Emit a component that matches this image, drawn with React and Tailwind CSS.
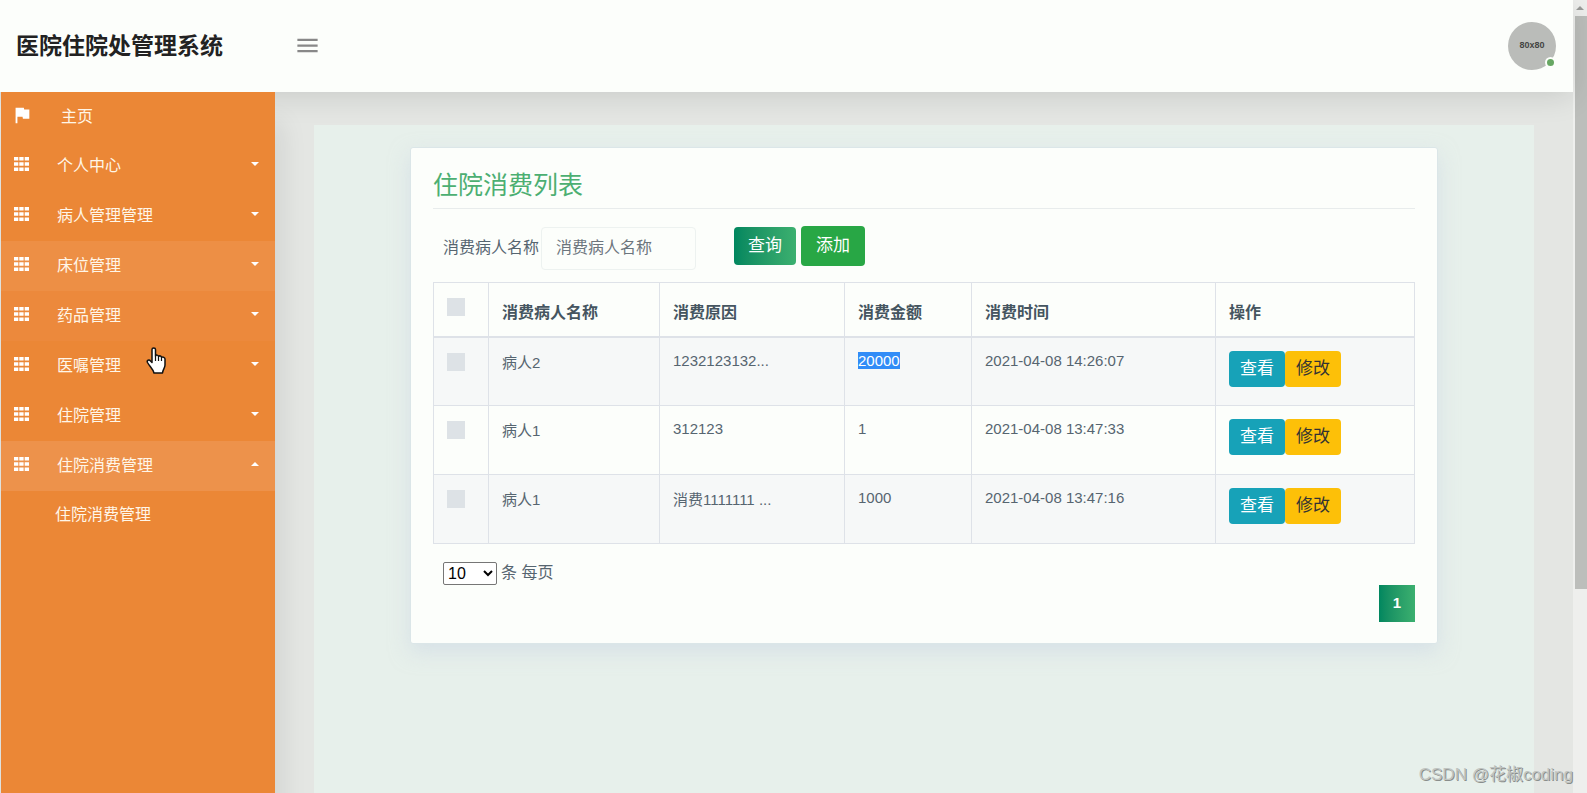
import React from 'react';
import { MdFlag, MdMenu } from 'react-icons/md';

const menu = [
  { name: '个人中心' },
  { name: '病人管理管理' },
  { name: '床位管理', bg: 'bg-[#ed8f45]' },
  { name: '药品管理', bg: 'bg-[#ec893c]' },
  { name: '医嘱管理' },
  { name: '住院管理' },
  { name: '住院消费管理', bg: 'bg-[#ed924b]', open: true },
];

const rows = [
  { name: '病人2', reason: '1232123132...', money: '20000', time: '2021-04-08 14:26:07', selected: true },
  { name: '病人1', reason: '312123', money: '1', time: '2021-04-08 13:47:33' },
  { name: '病人1', reason: '消费1111111 ...', money: '1000', time: '2021-04-08 13:47:16' },
];

const CheckBox = ({ label }) => (
  <input type="checkbox" aria-label={label} className="block appearance-none w-[18px] h-[18px] bg-[#dde2e6]" />
);

const Caret = ({ up }) => (
  <svg viewBox="0 0 8 4" className="w-2 h-1">
    <path d={up ? 'M0 4L4 0L8 4Z' : 'M0 0L4 4L8 0Z'} fill="currentColor" />
  </svg>
);

const GridIcon = () => (
  <svg viewBox="0 0 15 14" className="w-[15px] h-[14px]" fill="#fff">
    <path d="M0 0h4.300v3.600H0zM5.300 0h4.300v3.600H5.300zM10.700 0H15v3.600h-4.300zM0 5.200h4.300v3.600H0zM5.300 5.200h4.300v3.600H5.300zM10.700 5.200H15v3.600h-4.300zM0 10.400h4.300V14H0zM5.300 10.400h4.300V14H5.300zM10.700 10.400H15V14h-4.300z" />
  </svg>
);

const Header = () => (
  <header className="flex items-center h-[92px] shrink-0 pl-4 pr-[17px] pb-px bg-[#fcfefb] shadow-[0_4px_30px_rgba(0,0,0,0.12)]">
    <h1 className="w-[278px] text-[23px] leading-8 font-bold text-[#222]">医院住院处管理系统</h1>
    <button type="button" aria-label="菜单" className="text-[#888]">
      <MdMenu className="w-[27px] h-[27px]" />
    </button>
    <div className="relative ml-auto flex items-center justify-center w-12 h-12 rounded-full bg-[#babcb9] text-[9px] font-bold text-[#444]">
      80x80
      <span className="absolute right-0 bottom-0.5 w-[11px] h-[11px] rounded-full border-2 border-[#fcfefb] bg-[#67a763]" />
    </div>
  </header>
);

const Sidebar = () => (
  <nav className="relative w-[274px] ml-px shrink-0 bg-[#eb8736] text-[#fff6e8] text-base shadow-[8px_30px_24px_rgba(0,0,0,0.08)]">
    <ul>
      <li>
        <a href="#home" className="flex items-center h-[49px] pl-[10px]">
          <MdFlag className="w-[22px] h-[22px] mb-1 text-white" />
          <span className="ml-7">主页</span>
        </a>
      </li>
      {menu.map((item) => (
        <li key={item.name}>
          <a href="#menu" className={`flex items-center h-[50px] pl-[13px] pr-4 ${item.bg || ''}`}>
            <span className="mb-1"><GridIcon /></span>
            <span className="ml-7">{item.name}</span>
            <span className="flex ml-auto mb-1 text-white"><Caret up={item.open} /></span>
          </a>
          {item.open && (
            <a href="#list" className="flex items-center h-12 pl-[54px]">住院消费管理</a>
          )}
        </li>
      ))}
    </ul>
    {/* Pointer */}
    <svg viewBox="0 0 20 27" className="absolute left-[145px] top-[255px] w-5 h-[27px]">
      <path
        d="M6 2.5C6 .5 9.500 .5 9.500 2.500V9C10 7.500 12.500 8 12.500 9.500C13.500 8.300 15.500 9 15.500 10.500C17 9.500 19 10.500 19 12V18C19 21 17 22 16.500 26H8C7 22 4 20 1.500 15.500C.5 13.500 3 12 4.500 14L6 15.500Z"
        fill="#fff" stroke="#111" strokeWidth="1.5" strokeLinejoin="round"
      />
      <path d="M9.500 9V14M12.500 10V14M15.500 11V14" stroke="#111" strokeWidth="1.200" />
    </svg>
  </nav>
);

const List = () => (
  <section className="w-[1028px] max-w-full mx-auto px-[22px] py-[21px] rounded-[3px] border border-[#dbe6e8] bg-[#fcfefb] shadow-[0_8px_20px_rgba(200,212,228,0.5)]">
    <h2 className="pb-[7px] border-b border-[#e8ecec] text-[25px] leading-8 text-[#4caf72]">住院消费列表</h2>

    {/* Search */}
    <form className="flex items-center pl-[10px] mt-[17px]">
      <label htmlFor="patient" className="text-base">消费病人名称</label>
      <input
        id="patient"
        type="text"
        placeholder="消费病人名称"
        className="w-[155px] h-[43px] ml-0.5 px-[14px] rounded border border-[#edf2f0] text-base placeholder-[#6c757d]"
      />
      <div className="flex items-center gap-[5px] ml-[38px] mb-1 text-[17px] text-white">
        <button type="button" className="h-[38px] px-[14px] rounded bg-linear-to-r from-[#00875f] to-[#3bb06f]">查询</button>
        <button type="button" className="h-10 px-[15px] rounded bg-[#28a745]">添加</button>
      </div>
    </form>

    <table className="w-full mt-3 table-fixed border-collapse text-[15px] leading-6 text-left">
      <colgroup>
        <col className="w-[55px]" />
        <col className="w-[171px]" />
        <col className="w-[185px]" />
        <col className="w-[127px]" />
        <col className="w-[244px]" />
        <col />
      </colgroup>
      <thead>
        <tr className="h-[54px] text-base leading-6 text-[#455560]">
          <th className="border border-b-2 border-[#dee2e8] px-[13px] pt-[15px] align-top"><CheckBox label="全选" /></th>
          {['消费病人名称', '消费原因', '消费金额', '消费时间', '操作'].map((head) => (
            <th key={head} className="border border-b-2 border-[#dee2e8] px-[13px] pt-[18px] align-top font-bold">{head}</th>
          ))}
        </tr>
      </thead>
      <tbody>
        {rows.map((row) => (
          <tr key={row.time} className="h-[69px] align-top odd:bg-[#f6f8f8]">
            <td className="border border-[#dee2e8] px-[13px] pt-[15px]"><CheckBox label={row.name} /></td>
            <td className="border border-[#dee2e8] px-[13px] pt-[13px]">{row.name}</td>
            <td className={`border border-[#dee2e8] px-[13px] pt-[13px] ${/^\d/.test(row.reason) ? 'leading-5' : ''}`}>{row.reason}</td>
            <td className="border border-[#dee2e8] px-[13px] pt-[13px] leading-5">
              <span className={row.selected ? 'bg-[#318cf7] text-white' : ''}>{row.money}</span>
            </td>
            <td className="border border-[#dee2e8] px-[13px] pt-[13px] leading-5">{row.time}</td>
            <td className="border border-[#dee2e8] px-[13px] pt-[13px]">
              <div className="flex text-[17px]">
                <button type="button" className="w-14 h-9 rounded bg-[#17a2b8] text-white">查看</button>
                <button type="button" className="w-14 h-9 rounded bg-[#fdc008] text-[#333]">修改</button>
              </div>
            </td>
          </tr>
        ))}
      </tbody>
    </table>

    {/* Pagination */}
    <div className="flex items-center gap-1 pl-[10px] mt-[17px] text-base">
      <select id="size" aria-label="每页条数" className="w-[54px] h-[23px] rounded-xs border border-[#767676] bg-white text-black">
        <option>10</option>
      </select>
      <label htmlFor="size">条 每页</label>
    </div>
    <div className="flex justify-end">
      <button type="button" className="w-9 h-[37px] bg-linear-to-r from-[#00875f] to-[#3bb06f] text-[15px] font-bold text-white">1</button>
    </div>
  </section>
);

const App = () => {
  return (
    <div className="flex h-screen overflow-hidden bg-[#e4e6e3] font-['Liberation_Sans','Noto_Sans_CJK_SC',sans-serif] text-[#566570]">
      <div className="relative flex flex-col flex-1 min-w-0">
        <Header />
        <div className="flex flex-1 min-h-0">
          <Sidebar />
          <main className="flex-1 min-w-0 flex flex-col px-[39px] pt-[33px]">
            <div className="flex-1 pt-[22px] bg-[#e7f0eb]">
              <List />
            </div>
          </main>
        </div>
        <span className="absolute right-0 bottom-1 text-[17px] leading-7 text-[#c0c4c1] [text-shadow:1px_1px_0_#8a8e8c]">CSDN @花椒coding</span>
      </div>
      {/* Scroll bar */}
      <div className="w-[14px] shrink-0 bg-[#eeefed]">
        <div className="flex items-center justify-center h-4 text-[#9a9c9a]"><Caret up /></div>
        <div className="h-[573px] ml-0.5 bg-[#bcbebb]" />
      </div>
    </div>
  );
};

export default App;
